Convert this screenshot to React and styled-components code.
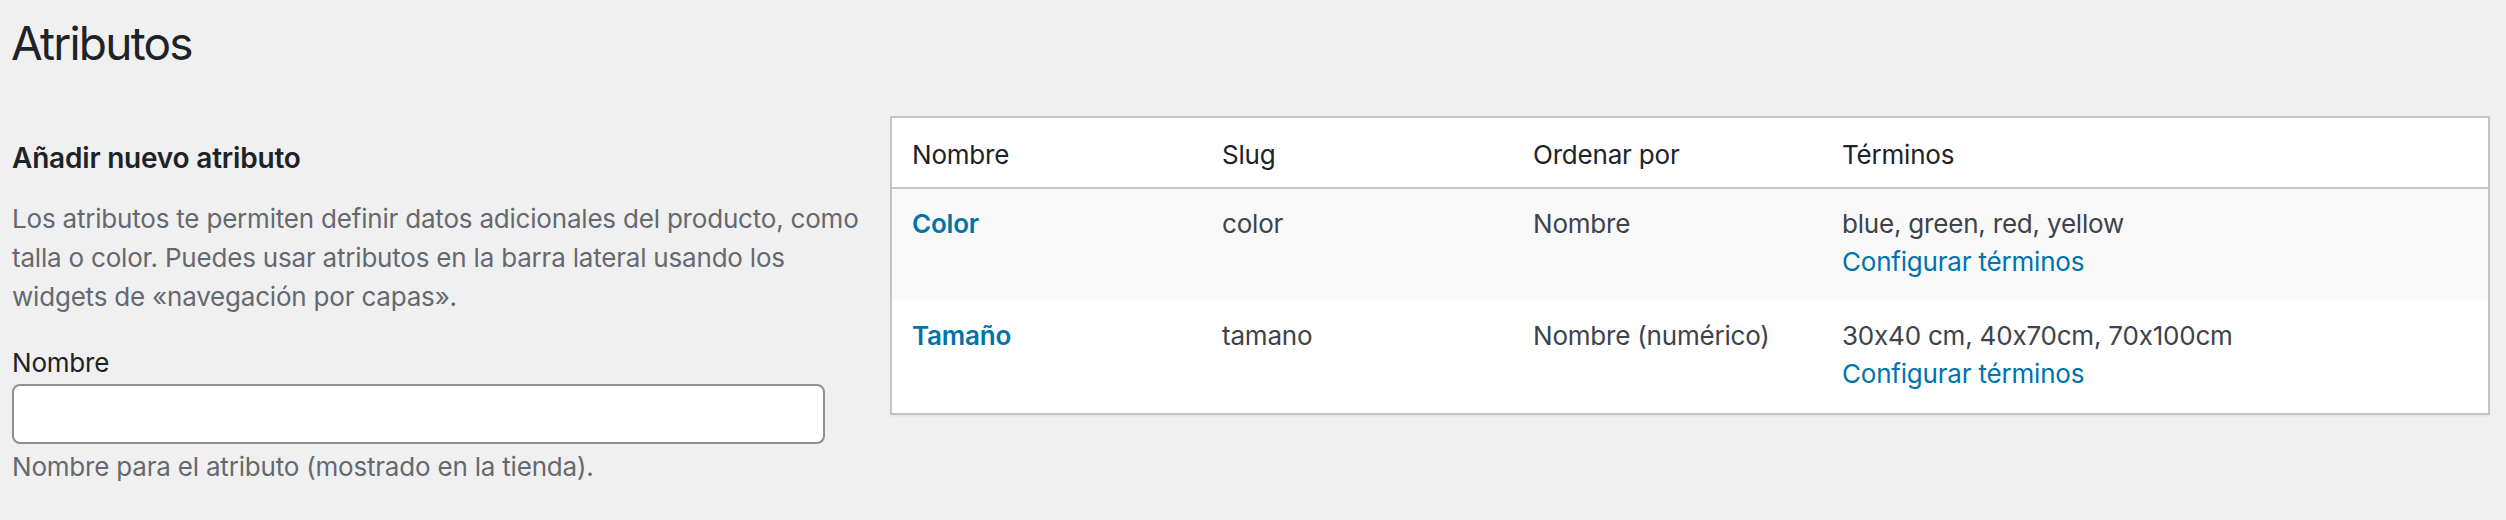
import React from 'react'
import styled, { createGlobalStyle } from 'styled-components'

const GlobalStyle = createGlobalStyle`
  html, body {
    margin: 0;
    padding: 0;
    background: #f0f0f1;
  }
  body {
    font-family: Inter, "Noto Sans", "Liberation Sans", sans-serif;
    font-feature-settings: "calt" 0;
    letter-spacing: -0.2px;
    color: #3c434a;
  }
`

const Wrap = styled.div`
  padding: 13px 16px 0 12px;
`

const Title = styled.h1`
  margin: 0 0 43px -1px;
  font-size: 46px;
  line-height: 60px;
  font-weight: 400;
  color: #1d2327;
  letter-spacing: -1.8px;
`

const Columns = styled.div`
  display: flex;
  align-items: flex-start;
`

const ColLeft = styled.div`
  width: 878px;
  flex-shrink: 0;
`

const ColRight = styled.div`
  flex: 1;
`

const FormTitle = styled.h2`
  margin: 25px 0 24px 0;
  font-size: 28px;
  line-height: 34px;
  font-weight: 600;
  color: #1d2327;
`

const Intro = styled.p`
  margin: 0 0 30px 0;
  font-size: 26px;
  line-height: 39px;
  color: #646970;
`

const Label = styled.label`
  display: block;
  font-size: 26px;
  line-height: 34px;
  color: #1d2327;
  margin-bottom: 4px;
`

const TextInput = styled.input`
  display: block;
  box-sizing: border-box;
  width: 813px;
  height: 60px;
  margin: 0;
  padding: 0 16px;
  border: 2px solid #8c8f94;
  border-radius: 8px;
  background: #fff;
  font-size: 26px;
  font-family: inherit;
  outline: none;
`

const Help = styled.p`
  margin: 3px 0 0 0;
  font-size: 26px;
  line-height: 39px;
  color: #646970;
`

const Table = styled.table`
  width: 100%;
  table-layout: fixed;
  border-collapse: separate;
  border-spacing: 0;
  background: #fff;
  border: 2px solid #c3c4c7;
  box-shadow: 0 2px 2px rgba(0, 0, 0, 0.04);
  font-size: 26px;
`

const Th = styled.th`
  width: ${(p) => p.w || 'auto'};
  padding: 17px 20px 13px 20px;
  text-align: left;
  font-weight: 400;
  line-height: 39px;
  color: #1d2327;
  border-bottom: 2px solid #c3c4c7;
`

const Row = styled.tr`
  background: ${(p) => (p.$alt ? '#f9f9f9' : '#fff')};
`

const Td = styled.td`
  padding: 16px 20px 20px 20px;
  vertical-align: top;
  line-height: 38px;
  color: #3c434a;
`

const NameLink = styled.a`
  color: #0073aa;
  font-weight: 600;
  text-decoration: none;
`

const TermsLink = styled.a`
  display: block;
  color: #0073aa;
  text-decoration: none;
`

const attributes = [
  { name: 'Color', slug: 'color', order: 'Nombre', terms: 'blue, green, red, yellow' },
  { name: 'Tamaño', slug: 'tamano', order: 'Nombre (numérico)', terms: '30x40 cm, 40x70cm, 70x100cm' },
]

const App = () => {
  return (
    <Wrap>
      <GlobalStyle />
      <Title>Atributos</Title>
      <Columns>
        <ColLeft>
          <FormTitle>Añadir nuevo atributo</FormTitle>
          <Intro>
            Los atributos te permiten definir datos adicionales del producto, como<br />
            talla o color. Puedes usar atributos en la barra lateral usando los<br />
            widgets de «navegación por capas».
          </Intro>
          <Label htmlFor="attribute_label">Nombre</Label>
          <TextInput id="attribute_label" type="text" />
          <Help>Nombre para el atributo (mostrado en la tienda).</Help>
        </ColLeft>
        <ColRight>
          <Table>
            <thead>
              <tr>
                <Th w="270px">Nombre</Th>
                <Th w="271px">Slug</Th>
                <Th w="269px">Ordenar por</Th>
                <Th>Términos</Th>
              </tr>
            </thead>
            <tbody>
              {attributes.map((attr, i) => (
                <Row key={attr.slug} $alt={i % 2 === 0}>
                  <Td><NameLink href="#">{attr.name}</NameLink></Td>
                  <Td>{attr.slug}</Td>
                  <Td>{attr.order}</Td>
                  <Td>
                    {attr.terms}
                    <TermsLink href="#">Configurar términos</TermsLink>
                  </Td>
                </Row>
              ))}
            </tbody>
          </Table>
        </ColRight>
      </Columns>
    </Wrap>
  )
}

export default App
